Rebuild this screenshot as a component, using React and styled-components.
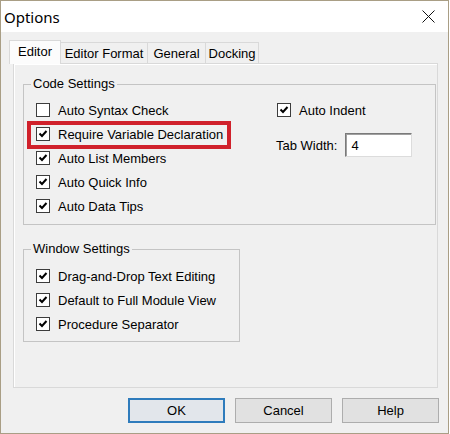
import React from "react";
import styled, { createGlobalStyle } from "styled-components";

const GlobalStyle = createGlobalStyle`
  html, body {
    margin: 0;
    padding: 0;
    background: #ffffff;
  }
  body {
    font-family: "Liberation Sans", Arial, sans-serif;
    font-size: 13px;
    color: #000000;
  }
`;

/**
 * The dialog frame with its thin tan outline
 */
const Window = styled.div`
  width: 449px;
  height: 434px;
  box-sizing: border-box;
  border: 1px solid #a99e85;
  background: #f0f0f0;
  display: flex;
  flex-direction: column;
`;

const TitleBar = styled.div`
  height: 31px;
  flex-shrink: 0;
  background: #ffffff;
  display: flex;
  align-items: center;
  justify-content: space-between;
  padding: 0 13px 0 3px;
  font-family: "Segoe UI", "Noto Sans", sans-serif;
  font-size: 15px;
`;

const Body = styled.div`
  padding-top: 8px;
  display: flex;
  flex-direction: column;
`;

const TabStrip = styled.div`
  display: flex;
  align-items: flex-end;
  height: 23px;
  margin-left: 8px;
`;

const Tab = styled.div`
  position: relative;
  z-index: ${props => (props.active ? 2 : 1)};
  box-sizing: border-box;
  width: ${props => props.width}px;
  height: ${props => (props.active ? 24 : 21)}px;
  margin-bottom: ${props => (props.active ? -1 : 0)}px;
  border: 1px solid #d9d9d9;
  border-bottom: none;
  background: ${props => (props.active ? "#fcfcfc" : "#f0f0f0")};
  display: flex;
  align-items: center;
  justify-content: center;
  padding-bottom: ${props => (props.active ? 2 : 0)}px;

  & + & {
    margin-left: -1px;
  }
`;

const Panel = styled.div`
  box-sizing: border-box;
  width: 425px;
  height: 325px;
  margin-left: 12px;
  border: 1px solid #d9d9d9;
  box-shadow: inset 1px 1px 0 #ffffff;
  background: #f0f0f0;
  padding: 12px 0 0 9px;
`;

const Group = styled.fieldset`
  box-sizing: border-box;
  width: ${props => props.width}px;
  margin: ${props => props.gap || 0}px 0 0 0;
  border: 1px solid #c4c4c4;
  padding: ${props => props.padTop}px 0 ${props => props.padBottom}px 12px;
`;

const Legend = styled.legend`
  line-height: 16px;
  padding: 0 2px;
  margin-left: -5px;
`;

const CodeGrid = styled.div`
  display: grid;
  grid-template-columns: 240px 1fr;
`;

const Column = styled.div`
  display: flex;
  flex-direction: column;
`;

const Row = styled.label`
  position: relative;
  height: 24px;
  display: flex;
  align-items: center;
  gap: 8px;
  margin-left: ${props => props.indent || 0}px;

  ${props =>
    props.marked &&
    `
    &::after {
      content: "";
      position: absolute;
      left: -9px;
      top: -1px;
      width: 204px;
      height: 28px;
      box-sizing: border-box;
      border: 4px solid #d0212b;
      pointer-events: none;
    }
  `}
`;

const Box = styled.span`
  box-sizing: border-box;
  width: 14px;
  height: 14px;
  border: 1px solid #3c3c3c;
  background: #ffffff;
  display: flex;
  align-items: center;
  justify-content: center;
  flex-shrink: 0;
`;

const FieldRow = styled.div`
  display: flex;
  align-items: center;
  gap: 8px;
  height: 24px;
  margin-top: 11px;
`;

const NumberInput = styled.div`
  box-sizing: border-box;
  width: 67px;
  height: 24px;
  background: #ffffff;
  border: 1px solid;
  border-color: #7a7a7a #dcdcdc #dcdcdc #7a7a7a;
  box-shadow: inset 1px 1px 0 #a0a0a0;
  display: flex;
  align-items: center;
  padding-left: 5px;
`;

const Footer = styled.div`
  display: flex;
  justify-content: flex-end;
  gap: 10px;
  margin-top: 10px;
  padding-right: 9px;
`;

const Button = styled.button`
  box-sizing: border-box;
  width: 97px;
  height: 25px;
  font: inherit;
  color: #000000;
  background: ${props => (props.primary ? "#e2e6eb" : "#e1e1e1")};
  border: ${props =>
    props.primary ? "2px solid #2f7cbc" : "1px solid #adadad"};
  padding: 0;
`;

const Close = () => (
  <svg width="13" height="13" viewBox="0 0 13 13">
    <path d="M0.5 0.5 L12.5 12.5 M12.5 0.5 L0.5 12.5" stroke="#111" strokeWidth="1" />
  </svg>
);

const Check = ({ checked, children, ...rest }) => (
  <Row {...rest}>
    <Box>
      {checked && (
        <svg width="10" height="10" viewBox="0 0 10 10">
          <path
            d="M1.5 4.5 L4 7 L8.5 2"
            fill="none"
            stroke="#000"
            strokeWidth="2"
          />
        </svg>
      )}
    </Box>
    {children}
  </Row>
);

const tabs = [
  { name: "Editor", width: 52 },
  { name: "Editor Format", width: 88 },
  { name: "General", width: 59 },
  { name: "Docking", width: 54 }
];

const codeSettings = [
  { name: "Auto Syntax Check", checked: false },
  { name: "Require Variable Declaration", checked: true, marked: true },
  { name: "Auto List Members", checked: true },
  { name: "Auto Quick Info", checked: true },
  { name: "Auto Data Tips", checked: true }
];

const windowSettings = [
  "Drag-and-Drop Text Editing",
  "Default to Full Module View",
  "Procedure Separator"
];

const App = () => (
  <>
    <GlobalStyle />
    <Window>
      <TitleBar>
        <span>Options</span>
        <Close />
      </TitleBar>
      <Body>
        <TabStrip>
          {tabs.map((tab, i) => (
            <Tab key={tab.name} width={tab.width} active={i === 0}>
              {tab.name}
            </Tab>
          ))}
        </TabStrip>
        <Panel>
          <Group width={413} padTop={6} padBottom={6}>
            <Legend>Code Settings</Legend>
            <CodeGrid>
              <Column>
                {codeSettings.map(item => (
                  <Check key={item.name} checked={item.checked} marked={item.marked}>
                    {item.name}
                  </Check>
                ))}
              </Column>
              <Column>
                <Check checked indent={1}>
                  Auto Indent
                </Check>
                <FieldRow>
                  <span>Tab Width:</span>
                  <NumberInput>4</NumberInput>
                </FieldRow>
              </Column>
            </CodeGrid>
          </Group>
          <Group width={217} gap={16} padTop={7} padBottom={5}>
            <Legend>Window Settings</Legend>
            {windowSettings.map(name => (
              <Check key={name} checked>
                {name}
              </Check>
            ))}
          </Group>
        </Panel>
        <Footer>
          <Button primary>OK</Button>
          <Button>Cancel</Button>
          <Button>Help</Button>
        </Footer>
      </Body>
    </Window>
  </>
);

export default App;
